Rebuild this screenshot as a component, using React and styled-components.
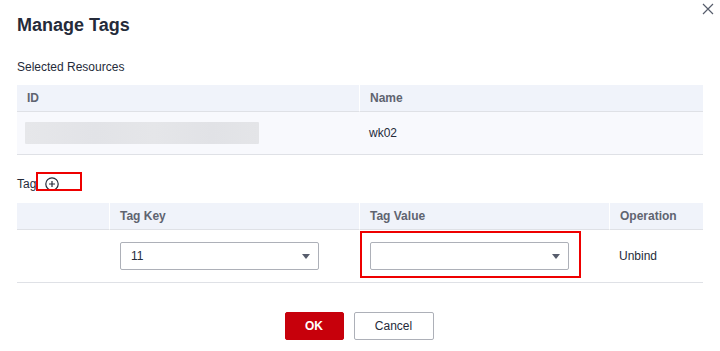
import React from "react";
import styled, { createGlobalStyle } from "styled-components";

const Global = createGlobalStyle`
  html, body { margin: 0; padding: 0; background: #fff; }
  body { font-family: "Liberation Sans", Arial, sans-serif; color: #252b3a; }
  * { box-sizing: border-box; }
`;

const Dialog = styled.div`
  position: relative;
  width: 720px;
  height: 351px;
  padding: 0 17px;
  display: flex;
  flex-direction: column;
  background: #fff;
`;

const Title = styled.h2`
  margin: 14px 0 0;
  font-size: 18px;
  line-height: 22px;
  font-weight: bold;
  color: #252b3a;
`;

const Close = styled.button`
  position: absolute;
  top: 2px;
  right: 5px;
  width: 14px;
  height: 14px;
  padding: 0;
  border: none;
  background: none;
  display: flex;
  align-items: center;
  justify-content: center;
`;

const Label = styled.div`
  font-size: 12px;
  line-height: 14px;
  color: #252b3a;
  margin-top: ${(p) => p.$mt}px;
  display: flex;
  align-items: center;
`;

const Table = styled.div`
  display: grid;
  grid-template-columns: ${(p) => p.$cols};
  margin-top: ${(p) => p.$mt}px;
  font-size: 12px;
`;

const Th = styled.div`
  height: 27px;
  background: #f0f3fa;
  border-bottom: 1px solid #dfe1e6;
  border-left: ${(p) => (p.$first ? "none" : "1px solid #fff")};
  padding-left: 10px;
  display: flex;
  align-items: center;
  color: #5f6470;
  font-weight: bold;
`;

const Td = styled.div`
  position: relative;
  height: ${(p) => p.$h}px;
  background: ${(p) => p.$bg || "#fff"};
  border-bottom: 1px solid #dfe1e6;
  padding-left: ${(p) => (p.$pl != null ? p.$pl : 10)}px;
  display: flex;
  align-items: center;
  color: #252b3a;
`;

const Blur = styled.div`
  width: 234px;
  height: 22px;
  border-radius: 1px;
  background: linear-gradient(90deg, #e6e7ea 0%, #e2e3e7 30%, #e5e6e9 55%, #e1e2e6 80%, #e4e5e8 100%);
  filter: blur(0.6px);
`;

const SelectBox = styled.div`
  width: 199px;
  height: 28px;
  border: 1px solid #adb0b8;
  border-radius: 2px;
  padding: 0 8px 0 10px;
  display: flex;
  align-items: center;
  justify-content: space-between;
  color: #252b3a;
  font-size: 12px;
  background: #fff;
`;

const Arrow = styled.span`
  width: 0;
  height: 0;
  border-left: 4px solid transparent;
  border-right: 4px solid transparent;
  border-top: 5px solid #575d6c;
`;

const Highlight = styled.div`
  position: absolute;
  border: 2px solid #ee0000;
  pointer-events: none;
  left: ${(p) => p.$l}px;
  top: ${(p) => p.$t}px;
  width: ${(p) => p.$w}px;
  height: ${(p) => p.$h}px;
`;

const AddWrap = styled.span`
  position: relative;
  display: inline-flex;
  align-items: center;
  margin-left: 9px;
  height: 14px;
`;

const Footer = styled.div`
  display: flex;
  justify-content: center;
  gap: 10px;
  margin-top: 29px;
  padding-right: 2px;
`;

const Button = styled.button`
  height: 28px;
  width: ${(p) => p.$w}px;
  border-radius: 2px;
  font-family: "Liberation Sans", Arial, sans-serif;
  font-size: 12px;
  padding: 0;
  cursor: pointer;
  border: 1px solid ${(p) => (p.$primary ? "#c7000b" : "#adb0b8")};
  background: ${(p) => (p.$primary ? "#c7000b" : "#fff")};
  color: ${(p) => (p.$primary ? "#fff" : "#252b3a")};
  font-weight: ${(p) => (p.$primary ? "bold" : "normal")};
`;

export default function App() {
  return (
    <>
      <Global />
      <Dialog>
        <Title>Manage Tags</Title>
        <Close aria-label="close">
          <svg width="12" height="12" viewBox="0 0 12 12">
            <path d="M1 1L11 11M11 1L1 11" stroke="#575d6c" strokeWidth="1.2" fill="none" />
          </svg>
        </Close>

        <Label $mt={24}>Selected Resources</Label>
        <Table $cols="342px 344px" $mt={11}>
          <Th $first>ID</Th>
          <Th>Name</Th>
          <Td $h={43} $bg="#f8f9fd" $pl={8}>
            <Blur />
          </Td>
          <Td $h={43} $bg="#f8f9fd">wk02</Td>
        </Table>

        <Label $mt={22}>
          Tag
          <AddWrap>
            <svg width="14" height="14" viewBox="0 0 14 14">
              <circle cx="7" cy="7" r="6.2" stroke="#252b3a" strokeWidth="1.2" fill="none" />
              <path d="M7 4v6M4 7h6" stroke="#252b3a" strokeWidth="1.2" />
            </svg>
            <Highlight $l={-9} $t={-5} $w={46} $h={19} />
          </AddWrap>
        </Label>

        <Table $cols="92px 250px 250px 94px" $mt={12}>
          <Th $first></Th>
          <Th>Tag Key</Th>
          <Th>Tag Value</Th>
          <Th>Operation</Th>
          <Td $h={53}></Td>
          <Td $h={53} $pl={11}>
            <SelectBox>
              <span>11</span>
              <Arrow />
            </SelectBox>
          </Td>
          <Td $h={53} $pl={11}>
            <SelectBox>
              <span></span>
              <Arrow />
            </SelectBox>
            <Highlight $l={1} $t={1} $w={221} $h={47} />
          </Td>
          <Td $h={53}>Unbind</Td>
        </Table>

        <Footer>
          <Button $primary $w={59}>OK</Button>
          <Button $w={80}>Cancel</Button>
        </Footer>
      </Dialog>
    </>
  );
}
